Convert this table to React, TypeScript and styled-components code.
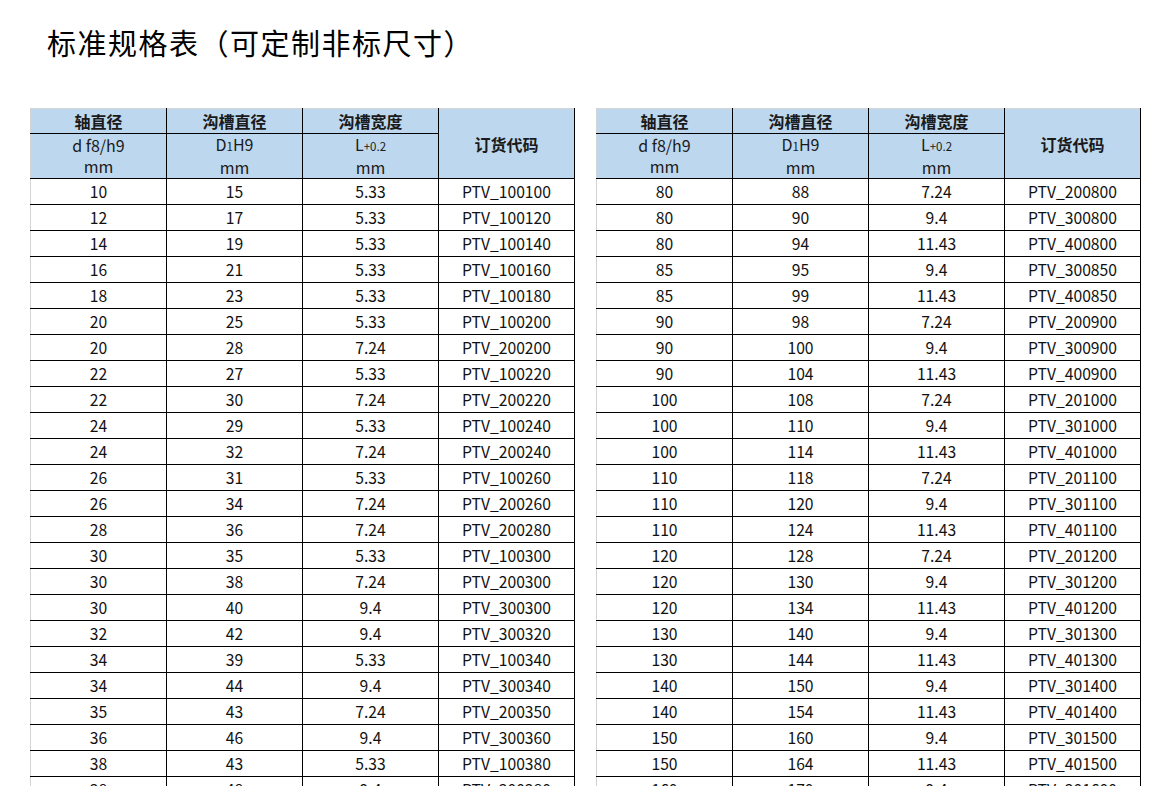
import React from "react";
import styled, { createGlobalStyle } from "styled-components";

const Global = createGlobalStyle`
  html, body { margin: 0; padding: 0; background: #fff; }
  body { overflow: hidden; font-family: "Noto Sans CJK SC", "Noto Sans", sans-serif; color: #000; }
`;

const Page = styled.div`
  width: 1170px;
  height: 786px;
  overflow: hidden;
  box-sizing: border-box;
  padding: 24px 0 0 30px;
`;

const Title = styled.h1`
  margin: 0 0 0 17px;
  font-size: 29px;
  line-height: 36px;
  font-weight: 400;
  letter-spacing: 1.5px;
  color: #000;
`;

const Tables = styled.div`
  display: flex;
  gap: 21px;
  margin-top: 48px;
  align-items: flex-start;
`;

const Table = styled.table`
  width: 545px;
  border-collapse: collapse;
  table-layout: fixed;
  font-size: 15.7px;
`;

const HeadCell = styled.th<{ $first?: boolean; $top?: boolean }>`
  background: #bdd7ee;
  border: 1px solid #000;
  border-top: ${(p) => (p.$top ? "1px solid #d4d4d4" : "1px solid #000")};
  border-left: ${(p) => (p.$first ? "1px solid #d4d4d4" : "1px solid #000")};
  padding: 0;
  text-align: center;
  vertical-align: middle;
  font-weight: 700;
  font-size: 16px;
  color: #1a1a1a;
  height: 24px;
  line-height: 24px;
`;

const SubCell = styled.th<{ $first?: boolean }>`
  background: #bdd7ee;
  border: 1px solid #000;
  border-left: ${(p) => (p.$first ? "1px solid #d4d4d4" : "1px solid #000")};
  padding: 0;
  text-align: center;
  font-weight: 400;
  font-size: 16px;
  color: #1a1a1a;
  height: 42px;
  line-height: 21px;
  vertical-align: middle;
`;

const Small = styled.span`
  font-size: 11.5px;
`;

const Cell = styled.td<{ $first?: boolean }>`
  border: 1px solid #000;
  border-left: ${(p) => (p.$first ? "1px solid #d4d4d4" : "1px solid #000")};
  padding: 0;
  height: 25px;
  line-height: 24px;
  text-align: center;
  color: #111;
  white-space: nowrap;
  overflow: hidden;
`;

type Row = [string, string, string, string];

const left: Row[] = [
  ["10", "15", "5.33", "PTV_100100"],
  ["12", "17", "5.33", "PTV_100120"],
  ["14", "19", "5.33", "PTV_100140"],
  ["16", "21", "5.33", "PTV_100160"],
  ["18", "23", "5.33", "PTV_100180"],
  ["20", "25", "5.33", "PTV_100200"],
  ["20", "28", "7.24", "PTV_200200"],
  ["22", "27", "5.33", "PTV_100220"],
  ["22", "30", "7.24", "PTV_200220"],
  ["24", "29", "5.33", "PTV_100240"],
  ["24", "32", "7.24", "PTV_200240"],
  ["26", "31", "5.33", "PTV_100260"],
  ["26", "34", "7.24", "PTV_200260"],
  ["28", "36", "7.24", "PTV_200280"],
  ["30", "35", "5.33", "PTV_100300"],
  ["30", "38", "7.24", "PTV_200300"],
  ["30", "40", "9.4", "PTV_300300"],
  ["32", "42", "9.4", "PTV_300320"],
  ["34", "39", "5.33", "PTV_100340"],
  ["34", "44", "9.4", "PTV_300340"],
  ["35", "43", "7.24", "PTV_200350"],
  ["36", "46", "9.4", "PTV_300360"],
  ["38", "43", "5.33", "PTV_100380"],
  ["38", "48", "9.4", "PTV_300380"],
];

const right: Row[] = [
  ["80", "88", "7.24", "PTV_200800"],
  ["80", "90", "9.4", "PTV_300800"],
  ["80", "94", "11.43", "PTV_400800"],
  ["85", "95", "9.4", "PTV_300850"],
  ["85", "99", "11.43", "PTV_400850"],
  ["90", "98", "7.24", "PTV_200900"],
  ["90", "100", "9.4", "PTV_300900"],
  ["90", "104", "11.43", "PTV_400900"],
  ["100", "108", "7.24", "PTV_201000"],
  ["100", "110", "9.4", "PTV_301000"],
  ["100", "114", "11.43", "PTV_401000"],
  ["110", "118", "7.24", "PTV_201100"],
  ["110", "120", "9.4", "PTV_301100"],
  ["110", "124", "11.43", "PTV_401100"],
  ["120", "128", "7.24", "PTV_201200"],
  ["120", "130", "9.4", "PTV_301200"],
  ["120", "134", "11.43", "PTV_401200"],
  ["130", "140", "9.4", "PTV_301300"],
  ["130", "144", "11.43", "PTV_401300"],
  ["140", "150", "9.4", "PTV_301400"],
  ["140", "154", "11.43", "PTV_401400"],
  ["150", "160", "9.4", "PTV_301500"],
  ["150", "164", "11.43", "PTV_401500"],
  ["160", "170", "9.4", "PTV_301600"],
];

const SpecTable: React.FC<{ rows: Row[] }> = ({ rows }) => (
  <Table>
    <colgroup>
      <col style={{ width: "25%" }} />
      <col style={{ width: "25%" }} />
      <col style={{ width: "25%" }} />
      <col style={{ width: "25%" }} />
    </colgroup>
    <thead>
      <tr>
        <HeadCell $first $top>轴直径</HeadCell>
        <HeadCell $top>沟槽直径</HeadCell>
        <HeadCell $top>沟槽宽度</HeadCell>
        <HeadCell $top rowSpan={2}>订货代码</HeadCell>
      </tr>
      <tr>
        <SubCell $first>
          d f8/h9
          <br />
          mm
        </SubCell>
        <SubCell>
          D<Small>1</Small>H9
          <br />
          mm
        </SubCell>
        <SubCell>
          L<Small>+0.2</Small>
          <br />
          mm
        </SubCell>
      </tr>
    </thead>
    <tbody>
      {rows.map((r, i) => (
        <tr key={i}>
          <Cell $first>{r[0]}</Cell>
          <Cell>{r[1]}</Cell>
          <Cell>{r[2]}</Cell>
          <Cell>{r[3]}</Cell>
        </tr>
      ))}
    </tbody>
  </Table>
);

export default function App() {
  return (
    <>
      <Global />
      <Page>
        <Title>标准规格表（可定制非标尺寸）</Title>
        <Tables>
          <SpecTable rows={left} />
          <SpecTable rows={right} />
        </Tables>
      </Page>
    </>
  );
}
